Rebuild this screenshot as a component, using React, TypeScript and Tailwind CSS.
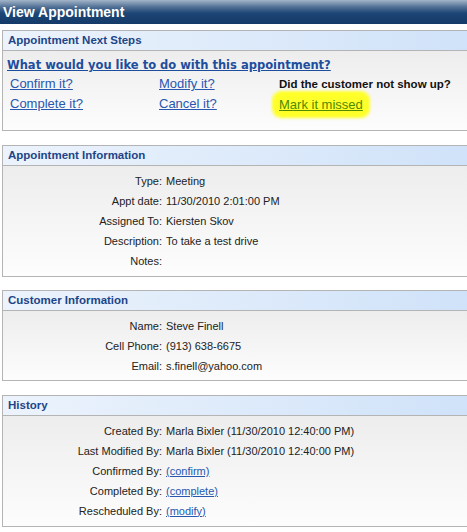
import React from "react"

const font = { fontFamily: '"Liberation Sans", Arial, sans-serif' }

function Panel({ title, children, className = "" }: { title: string; children: React.ReactNode; className?: string }) {
  return (
    <div className={`ml-[2px] w-[480px] border border-[#b4b4b4] ${className}`}>
      <div className="h-[20px] flex items-center pl-[5px] border-b border-[#b4b4b4] bg-[linear-gradient(to_right,#ecf3fc,#cfe2f9)]">
        <span className="text-[11.5px] font-bold text-[#1d4587]">{title}</span>
      </div>
      <div className="bg-[linear-gradient(to_bottom,#ededed,#fdfdfd)]">{children}</div>
    </div>
  )
}

function Row({ label, children }: { label: string; children?: React.ReactNode }) {
  return (
    <div className="flex h-[20px] items-center text-[11px] text-[#222]">
      <span className="w-[159px] text-right">{label}</span>
      <span className="pl-[4px]">{children}</span>
    </div>
  )
}

export default function App() {
  return (
    <div className="w-[467px] h-[532px] overflow-hidden bg-white" style={font}>
      <div className="h-[24px] flex items-center pl-[3px] bg-[linear-gradient(to_bottom,#a3b5c8_0%,#4f6f94_30%,#1d4575_55%,#133a68_100%)]">
        <span className="text-[14px] font-bold text-white">View Appointment</span>
      </div>

      <Panel title="Appointment Next Steps" className="mt-[6px]">
        <div className="h-[79px] pt-[6px]">
          <a href="#" className="ml-[4px] block font-bold text-[#1d4e9e] underline" style={{ fontFamily: '"DejaVu Sans", Verdana, sans-serif', fontSize: "11.5px" }}>
            What would you like to do with this appointment?
          </a>
          <div className="grid grid-cols-[149px_120px_auto] pl-[7px] mt-0">
            <a href="#" className="text-[13px] text-[#2857b0] underline h-[20px] leading-[20px]">Confirm it?</a>
            <a href="#" className="text-[13px] text-[#2857b0] underline h-[20px] leading-[20px]">Modify it?</a>
            <span className="text-[11.5px] font-bold text-[#111] h-[20px] leading-[20px]">Did the customer not show up?</span>
            <a href="#" className="text-[13px] text-[#2857b0] underline h-[20px] leading-[20px]">Complete it?</a>
            <a href="#" className="text-[13px] text-[#2857b0] underline h-[20px] leading-[20px]">Cancel it?</a>
            <span className="h-[20px] leading-[20px]">
              <a href="#" className="text-[13px] text-[#4f8a00] underline bg-[#ffff2a] -ml-[5px] px-[5px] py-[4px] rounded-[7px] shadow-[0_0_3px_2px_#ffff2a]">Mark it missed</a>
            </span>
          </div>
        </div>
      </Panel>

      <Panel title="Appointment Information" className="mt-[14px]">
        <div className="pt-[5px] pb-[5px]">
          <Row label="Type:">Meeting</Row>
          <Row label="Appt date:">11/30/2010 2:01:00 PM</Row>
          <Row label="Assigned To:">Kiersten Skov</Row>
          <Row label="Description:">To take a test drive</Row>
          <Row label="Notes:" />
        </div>
      </Panel>

      <Panel title="Customer Information" className="mt-[13px]">
        <div className="pt-[5px] pb-[4px]">
          <Row label="Name:">Steve Finell</Row>
          <Row label="Cell Phone:">(913) 638-6675</Row>
          <Row label="Email:">s.finell@yahoo.com</Row>
        </div>
      </Panel>

      <Panel title="History" className="mt-[14px]">
        <div className="pt-[5px] pb-[5px]">
          <Row label="Created By:">Marla Bixler (11/30/2010 12:40:00 PM)</Row>
          <Row label="Last Modified By:">Marla Bixler (11/30/2010 12:40:00 PM)</Row>
          <Row label="Confirmed By:"><a href="#" className="text-[#2857b0] underline">(confirm)</a></Row>
          <Row label="Completed By:"><a href="#" className="text-[#2857b0] underline">(complete)</a></Row>
          <Row label="Rescheduled By:"><a href="#" className="text-[#2857b0] underline">(modify)</a></Row>
        </div>
      </Panel>
    </div>
  )
}
